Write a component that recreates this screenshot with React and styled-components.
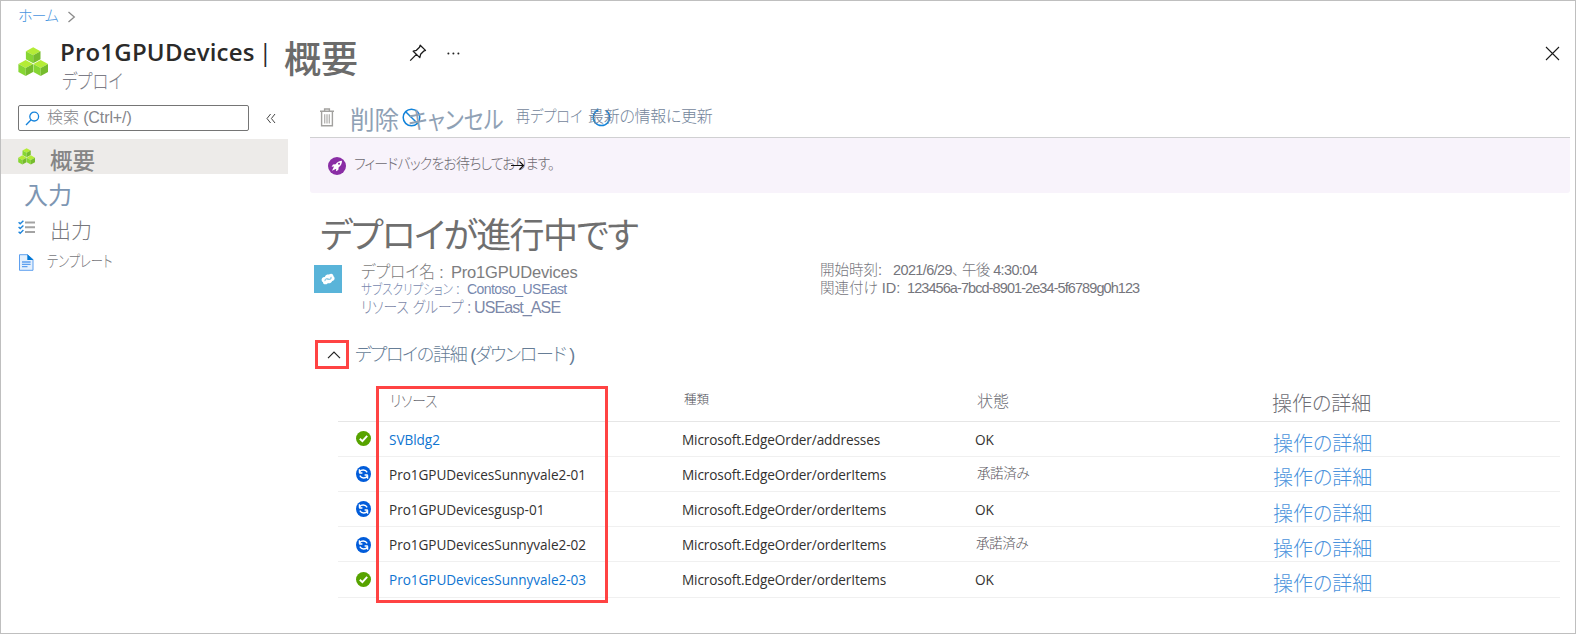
import React from "react";
import styled, { createGlobalStyle, css } from "styled-components";

const JP = '"Liberation Sans", "Noto Sans CJK JP", sans-serif';
const UI = '"Open Sans", "Noto Sans CJK JP", sans-serif';

const Global = createGlobalStyle`
  * { box-sizing: border-box; }
  body {
    margin: 0;
    background: #fff;
    font-family: ${JP};
    font-feature-settings: "palt";
    font-weight: 300;
    line-height: 1;
    white-space: nowrap;
  }
  svg { display: block; flex: none; }
  h1, h2, p { margin: 0; font-weight: inherit; }
`;

/* Narrow kana: squeezes glyphs horizontally from their left edge. */
const narrow = css`
  display: inline-block;
  transform-origin: 0 0;
  transform: scaleX(${(p) => p.$narrow || 1});
`;

const Squeezed = styled.span`
  ${narrow}
`;

const Frame = styled.div`
  width: 1576px;
  height: 634px;
  border: 1px solid #bfbfbf;
  overflow: hidden;
  display: flex;
  flex-direction: column;
`;

const Breadcrumb = styled.nav`
  height: 37px;
  padding: 7px 0 0 17px;
  display: flex;
  gap: 9px;
  color: #4a96e0;
  font-size: 15px;
  letter-spacing: -1px;
  a { width: 40px; }
  svg { margin-top: 3px; }
`;

const Header = styled.header`
  height: 61px;
  padding-left: 17px;
  display: flex;
  align-items: flex-start;
  > svg:first-child { margin-top: 9px; }
`;

const TitleBlock = styled.div`
  width: 224px;
  margin-left: 12px;
`;

const ResourceName = styled.h1`
  margin-top: -2px;
  font: 600 24px/32px ${UI};
  letter-spacing: 0.2px;
  color: #2b2a29;
  span { margin-left: 4px; font-weight: 400; }
`;

const Kind = styled.p`
  margin-top: 4px;
  margin-left: 2px;
  font-size: 20px;
  color: #7d7d87;
  ${narrow}
`;

const PageName = styled.h1`
  width: 125px;
  margin-top: 4px;
  font-size: 37px;
  font-weight: 500;
  color: #6b6b6b;
`;

const HeaderIcon = styled.span`
  margin: ${(p) => p.$top}px ${(p) => (p.$end ? "15px" : "20px")} 0 ${(p) => (p.$end ? "auto" : "0")};
`;

const Body = styled.div`
  flex: 1;
  display: grid;
  grid-template-columns: 309px 1fr;
`;

const Sidebar = styled.aside`
  padding-top: 6px;
`;

const SearchRow = styled.div`
  display: flex;
  align-items: center;
  gap: 17px;
  padding-left: 17px;
  margin-bottom: 8px;
`;

const SearchBox = styled.div`
  width: 231px;
  height: 26px;
  padding: 0 0 0 6px;
  border: 1px solid #757575;
  border-radius: 2px;
  display: flex;
  align-items: center;
  gap: 7px;
  color: #85858a;
  font-size: 16px;
  letter-spacing: -0.1px;
`;

const NavItem = styled.a`
  width: 287px;
  height: 35px;
  padding-left: 17px;
  display: flex;
  align-items: flex-start;
  background: ${(p) => (p.$active ? "#edebe9" : "transparent")};
  svg { margin-top: ${(p) => p.$iconTop}px; }
`;

const NavLabel = styled.span`
  margin-top: ${(p) => p.$top}px;
  margin-left: ${(p) => p.$left}px;
  font-size: ${(p) => p.$size}px;
  font-weight: ${(p) => p.$weight || 300};
  color: ${(p) => p.$color || "#77777c"};
  ${narrow}
`;

const Content = styled.main`
  width: 1260px;
`;

const Toolbar = styled.div`
  height: 39px;
  border-bottom: 1px solid #d0d0d2;
  display: grid;
  grid-template-columns: 40px 58px 108px 72px 1fr;
  align-items: start;
  > svg { margin: 9px 0 0 10px; }
`;

const Command = styled.a`
  position: relative;
  margin-top: 10px;
  font-size: ${(p) => (p.$large ? 24.5 : 16)}px;
  font-weight: ${(p) => (p.$large ? 400 : 300)};
  color: ${(p) => (p.$large ? "#8fa1b5" : "#73859b")};
  letter-spacing: ${(p) => p.$track || 0}px;
  svg { position: absolute; top: -1px; left: ${(p) => p.$iconLeft}px; z-index: -1; }
`;

const Feedback = styled.div`
  position: relative;
  height: 55px;
  padding: 19px 0 0 18px;
  display: flex;
  gap: 8px;
  background: #f8f3fb;
  border-radius: 0 0 3px 3px;
  font-size: 15px;
  color: #6e6a72;
  span { margin-top: -1px; letter-spacing: -0.95px; }
`;

const FeedbackArrow = styled.svg`
  position: absolute;
  left: 201px;
  top: 22px;
`;

const StatusTitle = styled.h2`
  margin: 25px 0 0 10px;
  height: 47px;
  font-size: 35px;
  font-weight: 400;
  letter-spacing: -1.6px;
  color: #6f6f6f;
`;

const Summary = styled.section`
  height: 75px;
  padding-left: 4px;
  display: grid;
  grid-template-columns: 47px 459px 1fr;
`;

const Facts = styled.dl`
  margin: ${(p) => p.$top || 0}px 0 0;
`;

const Fact = styled.div`
  height: ${(p) => p.$height}px;
  display: flex;
  font-size: ${(p) => p.$size}px;
  color: ${(p) => p.$color};
  dt { flex: 0 0 ${(p) => p.$key}px; min-width: 0; width: ${(p) => p.$key}px; }
  dd { margin: 0; letter-spacing: ${(p) => p.$track || 0}px; white-space: pre; }
`;

const DetailsToggle = styled.div`
  display: flex;
  align-items: flex-start;
  padding-left: 5px;
  height: 46px;
  span {
    margin: 6px 0 0 6px;
    font-size: 18px;
    letter-spacing: -1.25px;
    color: #667d96;
  }
`;

const CaretBox = styled.div`
  width: 34px;
  height: 29px;
  padding-left: 4px;
  border: 3px solid #ff4343;
  display: flex;
  align-items: center;
  justify-content: center;
`;

const Table = styled.div`
  position: relative;
  width: 1222px;
  margin-left: 28px;
`;

const Row = styled.div`
  height: ${(p) => p.$height || 35}px;
  display: grid;
  grid-template-columns: 51px 293px 293px 298px 1fr;
  align-items: start;
  border-bottom: 1px solid ${(p) => (p.$head ? "#e6e6e6" : "#f0f0f0")};
  > svg { margin: ${(p) => p.$iconTop}px 0 0 18px; }
`;

const HeadCell = styled.span`
  margin: ${(p) => p.$top}px 0 0 ${(p) => p.$left || 0}px;
  font-size: ${(p) => p.$size}px;
  color: ${(p) => p.$color || "#6d6d74"};
  ${narrow}
`;

const Cell = styled.span`
  font: 400 13.6px/${(p) => (p.$low ? 36 : 35)}px ${UI};
  letter-spacing: ${(p) => (p.$name ? "-0.05px" : "-0.12px")};
  color: ${(p) => (p.$link ? "#0f75d1" : "#323130")};
`;

const Accepted = styled.span`
  margin: 10px 0 0 ${(p) => (p.$low ? 1 : 2)}px;
  font-size: 13.5px;
  letter-spacing: -0.4px;
  color: #5a5860;
`;

const OperationLink = styled.a`
  margin-top: ${(p) => p.$top}px;
  font-size: 20px;
  color: #4a92dc;
`;

const Highlight = styled.div`
  position: absolute;
  left: 38px;
  top: 0;
  width: 232px;
  height: 217px;
  border: 3px solid #ff4343;
`;

const Cube = ({ x, y }) => (
  <g transform={`translate(${x} ${y})`}>
    <path d="M7.3 0L14.6 4L7.3 8L0 4Z" fill="#b4ec36" />
    <path d="M0 4L7.3 8V16L0 12Z" fill="#86d633" />
    <path d="M14.6 4L7.3 8V16L14.6 12Z" fill="#76bc2d" />
  </g>
);

const Cubes = ({ size }) => (
  <svg width={size} height={size} viewBox="0 0 30 30">
    <Cube x={7.9} y={0.3} />
    <Cube x={0.4} y={13} />
    <Cube x={15.4} y={13} />
  </svg>
);

const Chevron = () => (
  <svg width="9" height="12" viewBox="0 0 9 12" fill="none" stroke="#8a8a8a" strokeWidth="1.3">
    <path d="M1.5 1L7.3 6L1.5 11" />
  </svg>
);

const Pin = () => (
  <svg width="18" height="18" viewBox="0 0 18 18" fill="none" stroke="#1b1b1b" strokeWidth="1.3" strokeLinejoin="round">
    <path d="M11.2 1.2L16.5 6.4L14.6 7.2L11.6 10.3L10.8 13.6L4.2 7.2L7.4 6.3L10.5 3.2ZM7.4 10.4L1.2 16.6" />
  </svg>
);

const Dots = () => (
  <svg width="13" height="3" viewBox="0 0 13 3" fill="#222">
    <circle cx="1.4" cy="1.5" r="1" />
    <circle cx="6.4" cy="1.5" r="1" />
    <circle cx="11.4" cy="1.5" r="1" />
  </svg>
);

const Close = () => (
  <svg width="15" height="15" viewBox="0 0 15 15" stroke="#1b1b1b" strokeWidth="1.1">
    <path d="M1 1L14 14M14 1L1 14" />
  </svg>
);

const SearchIcon = () => (
  <svg width="15" height="15" viewBox="0 0 15 15" fill="none" stroke="#1583dc" strokeWidth="1.3">
    <circle cx="9.2" cy="5.6" r="4.4" />
    <path d="M6.1 8.8L1 14" />
  </svg>
);

const Collapse = () => (
  <svg width="10" height="11" viewBox="0 0 10 11" fill="none" stroke="#444" strokeWidth="1">
    <path d="M4.6 1L1 5.5L4.6 10M9 1L5.4 5.5L9 10" />
  </svg>
);

const Checklist = () => (
  <svg width="17" height="15" viewBox="0 0 17 15" fill="none">
    <path d="M7 2.5H17M7 7.2H17M7 11.9H17" stroke="#a3a3a3" strokeWidth="2" />
    <path d="M0.6 2.3L2.2 3.8L5.4 0.7M0.6 7L2.2 8.5L5.4 5.4M0.6 11.7L2.2 13.2L5.4 10.1" stroke="#1f86dc" strokeWidth="1.4" />
  </svg>
);

const Doc = () => (
  <svg width="16" height="17" viewBox="0 0 16 17">
    <path d="M1.5 0.7H9.5L15 5.6V16.3H1.5Z" fill="#e4f0fd" stroke="#5ea0ef" />
    <path d="M9.3 0.2L15.5 5.9H9.3Z" fill="#0078d4" />
    <path d="M4 8H12.6M4 10.3H12.6M4 12.6H9.5" stroke="#5ea0ef" strokeWidth="1.3" />
  </svg>
);

const Trash = () => (
  <svg width="14" height="19" viewBox="0 0 14 19" fill="none" stroke="#a2a19f" strokeWidth="1.4">
    <path d="M0 3.2H14M4.6 3V1H9.4V3M1.6 3.5V17.8H12.4V3.5" />
    <path d="M4.7 6.2V15.5M7 6.2V15.5M9.3 6.2V15.5" stroke="#b3b2b0" strokeWidth="1.3" />
  </svg>
);

const Cancel = () => (
  <svg width="19" height="19" viewBox="0 0 19 19" fill="none" stroke="#1283da" strokeWidth="1.5">
    <circle cx="9.5" cy="9.5" r="8.3" />
    <path d="M3.7 3.7L15.3 15.3" />
  </svg>
);

const Refresh = () => (
  <svg width="19" height="19" viewBox="0 0 19 19" fill="none" stroke="#1283da" strokeWidth="1.5">
    <path d="M5.2 2.4A8.2 8.2 0 1 0 13.8 2.4M5.6 0.6V3.2H2.6" />
  </svg>
);

const Rocket = () => (
  <svg width="18" height="18" viewBox="0 0 18 18">
    <circle cx="9" cy="9" r="9" fill="#8a2da5" />
    <path d="M14 3.8C11.3 3.8 9.2 5 7.6 7.2L5 7.6L3.6 9.8L6 9.6L4 13.8L8.2 11.8L8 14.2L10.3 12.9L10.7 10.3C13 8.6 14 6.5 14 3.8Z" fill="#fff" />
    <circle cx="11" cy="6.8" r="1" fill="#8a2da5" />
  </svg>
);

const DeploymentIcon = () => (
  <svg width="28" height="28" viewBox="0 0 28 28">
    <rect width="28" height="28" fill="#59b4d9" />
    <path d="M7.8 16C7 13.6 8.6 11.8 10.8 12C11.6 9.6 13.6 9.4 15 9.6C17 7.8 19.6 9 19.4 11.2C21.4 12.6 20.8 15.6 18.2 16C17.4 18.2 15.4 18.6 13.8 18.2C11.8 20.4 8.6 19.2 9 17C8.4 16.9 8 16.5 7.8 16Z" fill="#fff" />
    <path d="M11 16.2C10.6 14 13 13 14.4 14.6M13.6 13.8C15.4 15.2 17.6 14 17 11.8" fill="none" stroke="#8fcce6" strokeWidth="1.3" />
  </svg>
);

const Caret = () => (
  <svg width="14" height="8" viewBox="0 0 14 8" fill="none" stroke="#222" strokeWidth="1.2">
    <path d="M1 7.2L7 1.2L13 7.2" />
  </svg>
);

const Done = () => (
  <svg width="15" height="15" viewBox="0 0 15 15">
    <circle cx="7.5" cy="7.5" r="7.5" fill="#57a300" />
    <path d="M3.8 7.7L6.4 10.2L11.2 4.8" fill="none" stroke="#fff" strokeWidth="1.9" />
  </svg>
);

const Syncing = () => (
  <svg width="15" height="16" viewBox="0 0 15 15" preserveAspectRatio="none">
    <circle cx="7.5" cy="7.5" r="7.5" fill="#015cda" />
    <path d="M3.2 6.6H6.4M3.4 3V6.4M3.6 5.4C5.2 3.2 9.4 3 11.2 5.9M11.8 8.4H8.6M11.6 12V8.6M11.4 9.6C9.8 11.8 5.6 12 3.8 9.1" fill="none" stroke="#fff" strokeWidth="1.3" />
  </svg>
);

const rows = [
  { iconTop: 9, linkTop: 12, done: true, link: true, name: "SVBldg2", type: "Microsoft.EdgeOrder/addresses", status: "OK" },
  { iconTop: 9, linkTop: 11, name: "Pro1GPUDevicesSunnyvale2-01", type: "Microsoft.EdgeOrder/orderItems", status: "承諾済み" },
  { iconTop: 9, linkTop: 12, low: true, name: "Pro1GPUDevicesgusp-01", type: "Microsoft.EdgeOrder/orderItems", status: "OK" },
  { iconTop: 10, linkTop: 12, low: true, name: "Pro1GPUDevicesSunnyvale2-02", type: "Microsoft.EdgeOrder/orderItems", status: "承諾済み" },
  { iconTop: 10, linkTop: 12, low: true, done: true, link: true, name: "Pro1GPUDevicesSunnyvale2-03", type: "Microsoft.EdgeOrder/orderItems", status: "OK" },
];

export default function App() {
  return (
    <Frame>
      <Global />
      <Breadcrumb>
        <a>ホーム</a>
        <Chevron />
      </Breadcrumb>
      <Header>
        <Cubes size={30} />
        <TitleBlock>
          <ResourceName>Pro1GPUDevices<span>|</span></ResourceName>
          <Kind $narrow={0.82}>デプロイ</Kind>
        </TitleBlock>
        <PageName>概要</PageName>
        <HeaderIcon $top={6}><Pin /></HeaderIcon>
        <HeaderIcon $top={14}><Dots /></HeaderIcon>
        <HeaderIcon $top={8} $end><Close /></HeaderIcon>
      </Header>
      <Body>
        <Sidebar>
          <SearchRow>
            <SearchBox><SearchIcon />検索 (Ctrl+/)</SearchBox>
            <Collapse />
          </SearchRow>
          <NavItem $active $iconTop={9}>
            <Cubes size={17} />
            <NavLabel $top={12} $left={15} $size={22.5} $weight={500} $color="#858585">概要</NavLabel>
          </NavItem>
          <NavItem>
            <NavLabel $top={10} $left={6} $size={24} $weight={400} $color="#7d96b3">入力</NavLabel>
          </NavItem>
          <NavItem $iconTop={11}>
            <Checklist />
            <NavLabel $top={11} $left={15} $size={21}>出力</NavLabel>
          </NavItem>
          <NavItem $iconTop={10}>
            <Doc />
            <NavLabel $top={10} $left={13} $size={16} $narrow={0.77}>テンプレート</NavLabel>
          </NavItem>
        </Sidebar>
        <Content>
          <Toolbar>
            <Trash />
            <Command $large>削除</Command>
            <Command $large $iconLeft={-6}><Cancel /><Squeezed $narrow={0.86}>キャンセル</Squeezed></Command>
            <Command><Squeezed $narrow={0.88}>再デプロイ</Squeezed></Command>
            <Command $track={-0.3} $iconLeft={4}><Refresh />最新の情報に更新</Command>
          </Toolbar>
          <Feedback>
            <Rocket />
            <span><Squeezed $narrow={0.93}>フィードバックをお待ちしております。</Squeezed></span>
            <FeedbackArrow width="14" height="10" viewBox="0 0 14 10" fill="none" stroke="#111" strokeWidth="1.1">
              <path d="M0 5.5H12.5M8.5 1.5L12.5 5.5L8.5 9.5" />
            </FeedbackArrow>
          </Feedback>
          <StatusTitle>デプロイが進行中です</StatusTitle>
          <Summary>
            <DeploymentIcon />
            <Facts $top={-1}>
              <Fact $size={16.5} $height={18} $key={90} $color="#7d7d80" $track={-0.2}><dt><Squeezed $narrow={0.95}>デプロイ名 :</Squeezed></dt><dd>Pro1GPUDevices</dd></Fact>
              <Fact $size={14} $height={18} $key={106} $color="#7788ae" $track={-0.55}><dt><Squeezed $narrow={0.83}>サブスクリプション :</Squeezed></dt><dd>Contoso_USEast</dd></Fact>
              <Fact $size={16} $height={18} $key={113} $color="#7c88a8" $track={-0.9}><dt><Squeezed $narrow={0.86}>リソース グループ :</Squeezed></dt><dd>USEast_ASE</dd></Fact>
            </Facts>
            <Facts $top={-2}>
              <Fact $size={14.5} $height={18} $key={73} $color="#75757c" $track={-0.62}><dt>開始時刻:</dt><dd>2021/6/29、 午後 4:30:04</dd></Fact>
              <Fact $size={14.5} $height={18} $key={87} $color="#75757c" $track={-0.92}><dt>関連付け ID:</dt><dd>123456a-7bcd-8901-2e34-5f6789g0h123</dd></Fact>
            </Facts>
          </Summary>
          <DetailsToggle>
            <CaretBox><Caret /></CaretBox>
            <span>デプロイの詳細 (ダウンロード )</span>
          </DetailsToggle>
          <Table>
            <Row $head $height={36}>
              <i />
              <HeadCell $top={8} $left={1} $size={15.5} $narrow={0.88}>リソース</HeadCell>
              <HeadCell $top={8} $left={2} $size={12.5} $color="#4f4f57">種類</HeadCell>
              <HeadCell $top={8} $left={2} $size={16}>状態</HeadCell>
              <HeadCell $top={8} $left={-1} $size={20}>操作の詳細</HeadCell>
            </Row>
            {rows.map((r, i) => (
              <Row key={r.name} $height={i === 4 ? 36 : 35} $iconTop={r.iconTop}>
                {r.done ? <Done /> : <Syncing />}
                <Cell $name $low={r.low} $link={r.link}>{r.name}</Cell>
                <Cell $low={r.low}>{r.type}</Cell>
                {r.status === "OK" ? <Cell $low={r.low}>OK</Cell> : <Accepted $low={r.low}>{r.status}</Accepted>}
                <OperationLink $top={r.linkTop}>操作の詳細</OperationLink>
              </Row>
            ))}
            <Highlight />
          </Table>
        </Content>
      </Body>
    </Frame>
  );
}
